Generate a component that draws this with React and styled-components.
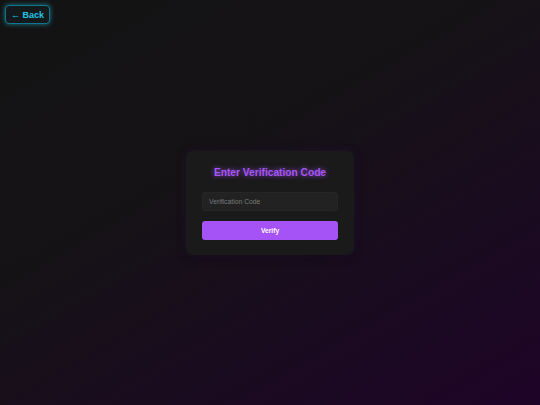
import React, { useState } from 'react';
import styled, { createGlobalStyle } from 'styled-components';

const GlobalStyle = createGlobalStyle`
  html, body, #root {
    margin: 0;
    height: 100%;
  }
  body {
    font-family: "Liberation Sans", Arial, sans-serif;
    background: linear-gradient(150deg, #131313 0%, #151216 40%, #1e0428 100%);
    color: #fff;
  }
`;

const Page = styled.div`
  position: relative;
  min-height: 100%;
  display: flex;
  align-items: center;
  justify-content: center;
`;

const BackButton = styled.button`
  position: absolute;
  top: 5px;
  left: 5px;
  height: 19px;
  padding: 0 5px;
  background: #141a1c;
  border: 1.5px solid #0e7490;
  border-radius: 4px;
  box-shadow: 0 0 5px rgba(34, 211, 238, 0.55);
  color: #22c5e6;
  font-family: inherit;
  font-size: 9px;
  font-weight: 700;
  cursor: pointer;
`;

const Card = styled.form`
  width: 168px;
  box-sizing: border-box;
  padding: 16px 16px 15px;
  background: #1a1a1a;
  border-radius: 7px;
  box-shadow: 0 0 10px rgba(168, 85, 247, 0.12), 0 2px 8px rgba(0, 0, 0, 0.5);
  display: flex;
  flex-direction: column;
`;

const Title = styled.h2`
  margin: 0 0 13px;
  line-height: 12px;
  text-align: center;
  font-size: 10.2px;
  font-weight: 700;
  color: #a855f7;
  text-shadow: 0 0 5px rgba(168, 85, 247, 0.85);
`;

const Input = styled.input`
  height: 19px;
  box-sizing: border-box;
  padding: 0 6px;
  background: #222222;
  border: 1px solid #262626;
  border-radius: 3px;
  color: #ddd;
  font-family: inherit;
  font-size: 6.8px;
  outline: none;

  &::placeholder {
    color: #7a7a7a;
  }
`;

const Submit = styled.button`
  margin-top: 10px;
  height: 19px;
  background: #a552f6;
  border: none;
  border-radius: 3px;
  color: #fff;
  font-family: inherit;
  font-size: 6.7px;
  font-weight: 700;
  cursor: pointer;
`;

export default function App() {
  const [code, setCode] = useState('');

  return (
    <>
      <GlobalStyle />
      <Page>
        <BackButton type="button">← Back</BackButton>
        <Card onSubmit={(e) => e.preventDefault()}>
          <Title>Enter Verification Code</Title>
          <Input
            placeholder="Verification Code"
            value={code}
            onChange={(e) => setCode(e.target.value)}
          />
          <Submit type="submit">Verify</Submit>
        </Card>
      </Page>
    </>
  );
}
